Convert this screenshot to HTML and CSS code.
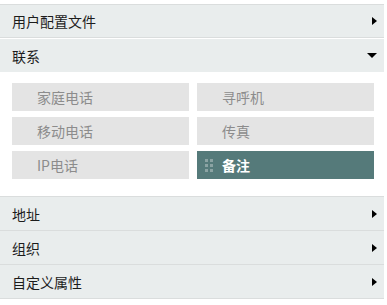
FILE: index.html
```html
<!DOCTYPE html>
<html lang="zh">
<head>
    <meta charset="UTF-8">
    <title>联系人</title>
    <link rel="stylesheet" href="styles.css">
</head>
<body>
    <div class="accordion">
        <div class="header first">
            <span>用户配置文件</span>
            <i class="arrow right"></i>
        </div>
        <div class="header open">
            <span>联系</span>
            <i class="arrow down"></i>
        </div>
        <div class="panel">
            <div class="tile">家庭电话</div>
            <div class="tile">寻呼机</div>
            <div class="tile">移动电话</div>
            <div class="tile">传真</div>
            <div class="tile">IP电话</div>
            <div class="tile active">
                <span class="handle">
                    <b></b><b></b><b></b><b></b><b></b><b></b>
                </span>
                备注
            </div>
        </div>
        <div class="header">
            <span>地址</span>
            <i class="arrow right"></i>
        </div>
        <div class="header">
            <span>组织</span>
            <i class="arrow right"></i>
        </div>
        <div class="header last">
            <span>自定义属性</span>
            <i class="arrow right"></i>
        </div>
    </div>
</body>
</html>
```

FILE: styles.css
```css
body {
    margin: 0;
    padding: 4px 3px 0 0;
    background-color: #fff;
    font-family: "Noto Sans CJK SC", "Noto Sans", sans-serif;
    font-size: 14px;
}
.header {
    display: flex;
    justify-content: space-between;
    align-items: center;
    height: 33px;
    padding: 0 7px 0 12px;
    background-color: #e9eded;
    border-top: 1px solid #dadddd;
    color: #1c1c1c;
}
.header.first {
    border-bottom: 1px solid #dadddd;
    height: 32px;
    margin-bottom: 1px;
}
.header.open {
    border-top: none;
}
.header.last {
    border-bottom: 1px solid #dadddd;
}
.arrow {
    width: 0;
    height: 0;
}
.arrow.right {
    border-left: 5px solid #000;
    border-top: 4px solid transparent;
    border-bottom: 4px solid transparent;
}
.arrow.down {
    border-top: 5px solid #000;
    border-left: 5px solid transparent;
    border-right: 5px solid transparent;
}
.panel {
    display: grid;
    grid-template-columns: 177px 177px;
    grid-auto-rows: 28px;
    column-gap: 8px;
    row-gap: 6px;
    padding: 11px 0 17px 12px;
}
.tile {
    display: flex;
    align-items: center;
    padding-left: 25px;
    background-color: #e4e4e4;
    color: #8c8c8c;
}
.tile.active {
    position: relative;
    background-color: #557a7a;
    color: #fff;
    font-weight: bold;
}
.handle {
    position: absolute;
    left: 8px;
    top: 8px;
    display: grid;
    grid-template-columns: 3px 3px;
    gap: 2px;
}
.handle b {
    width: 3px;
    height: 3px;
    background-color: #8ba3a3;
}
```
